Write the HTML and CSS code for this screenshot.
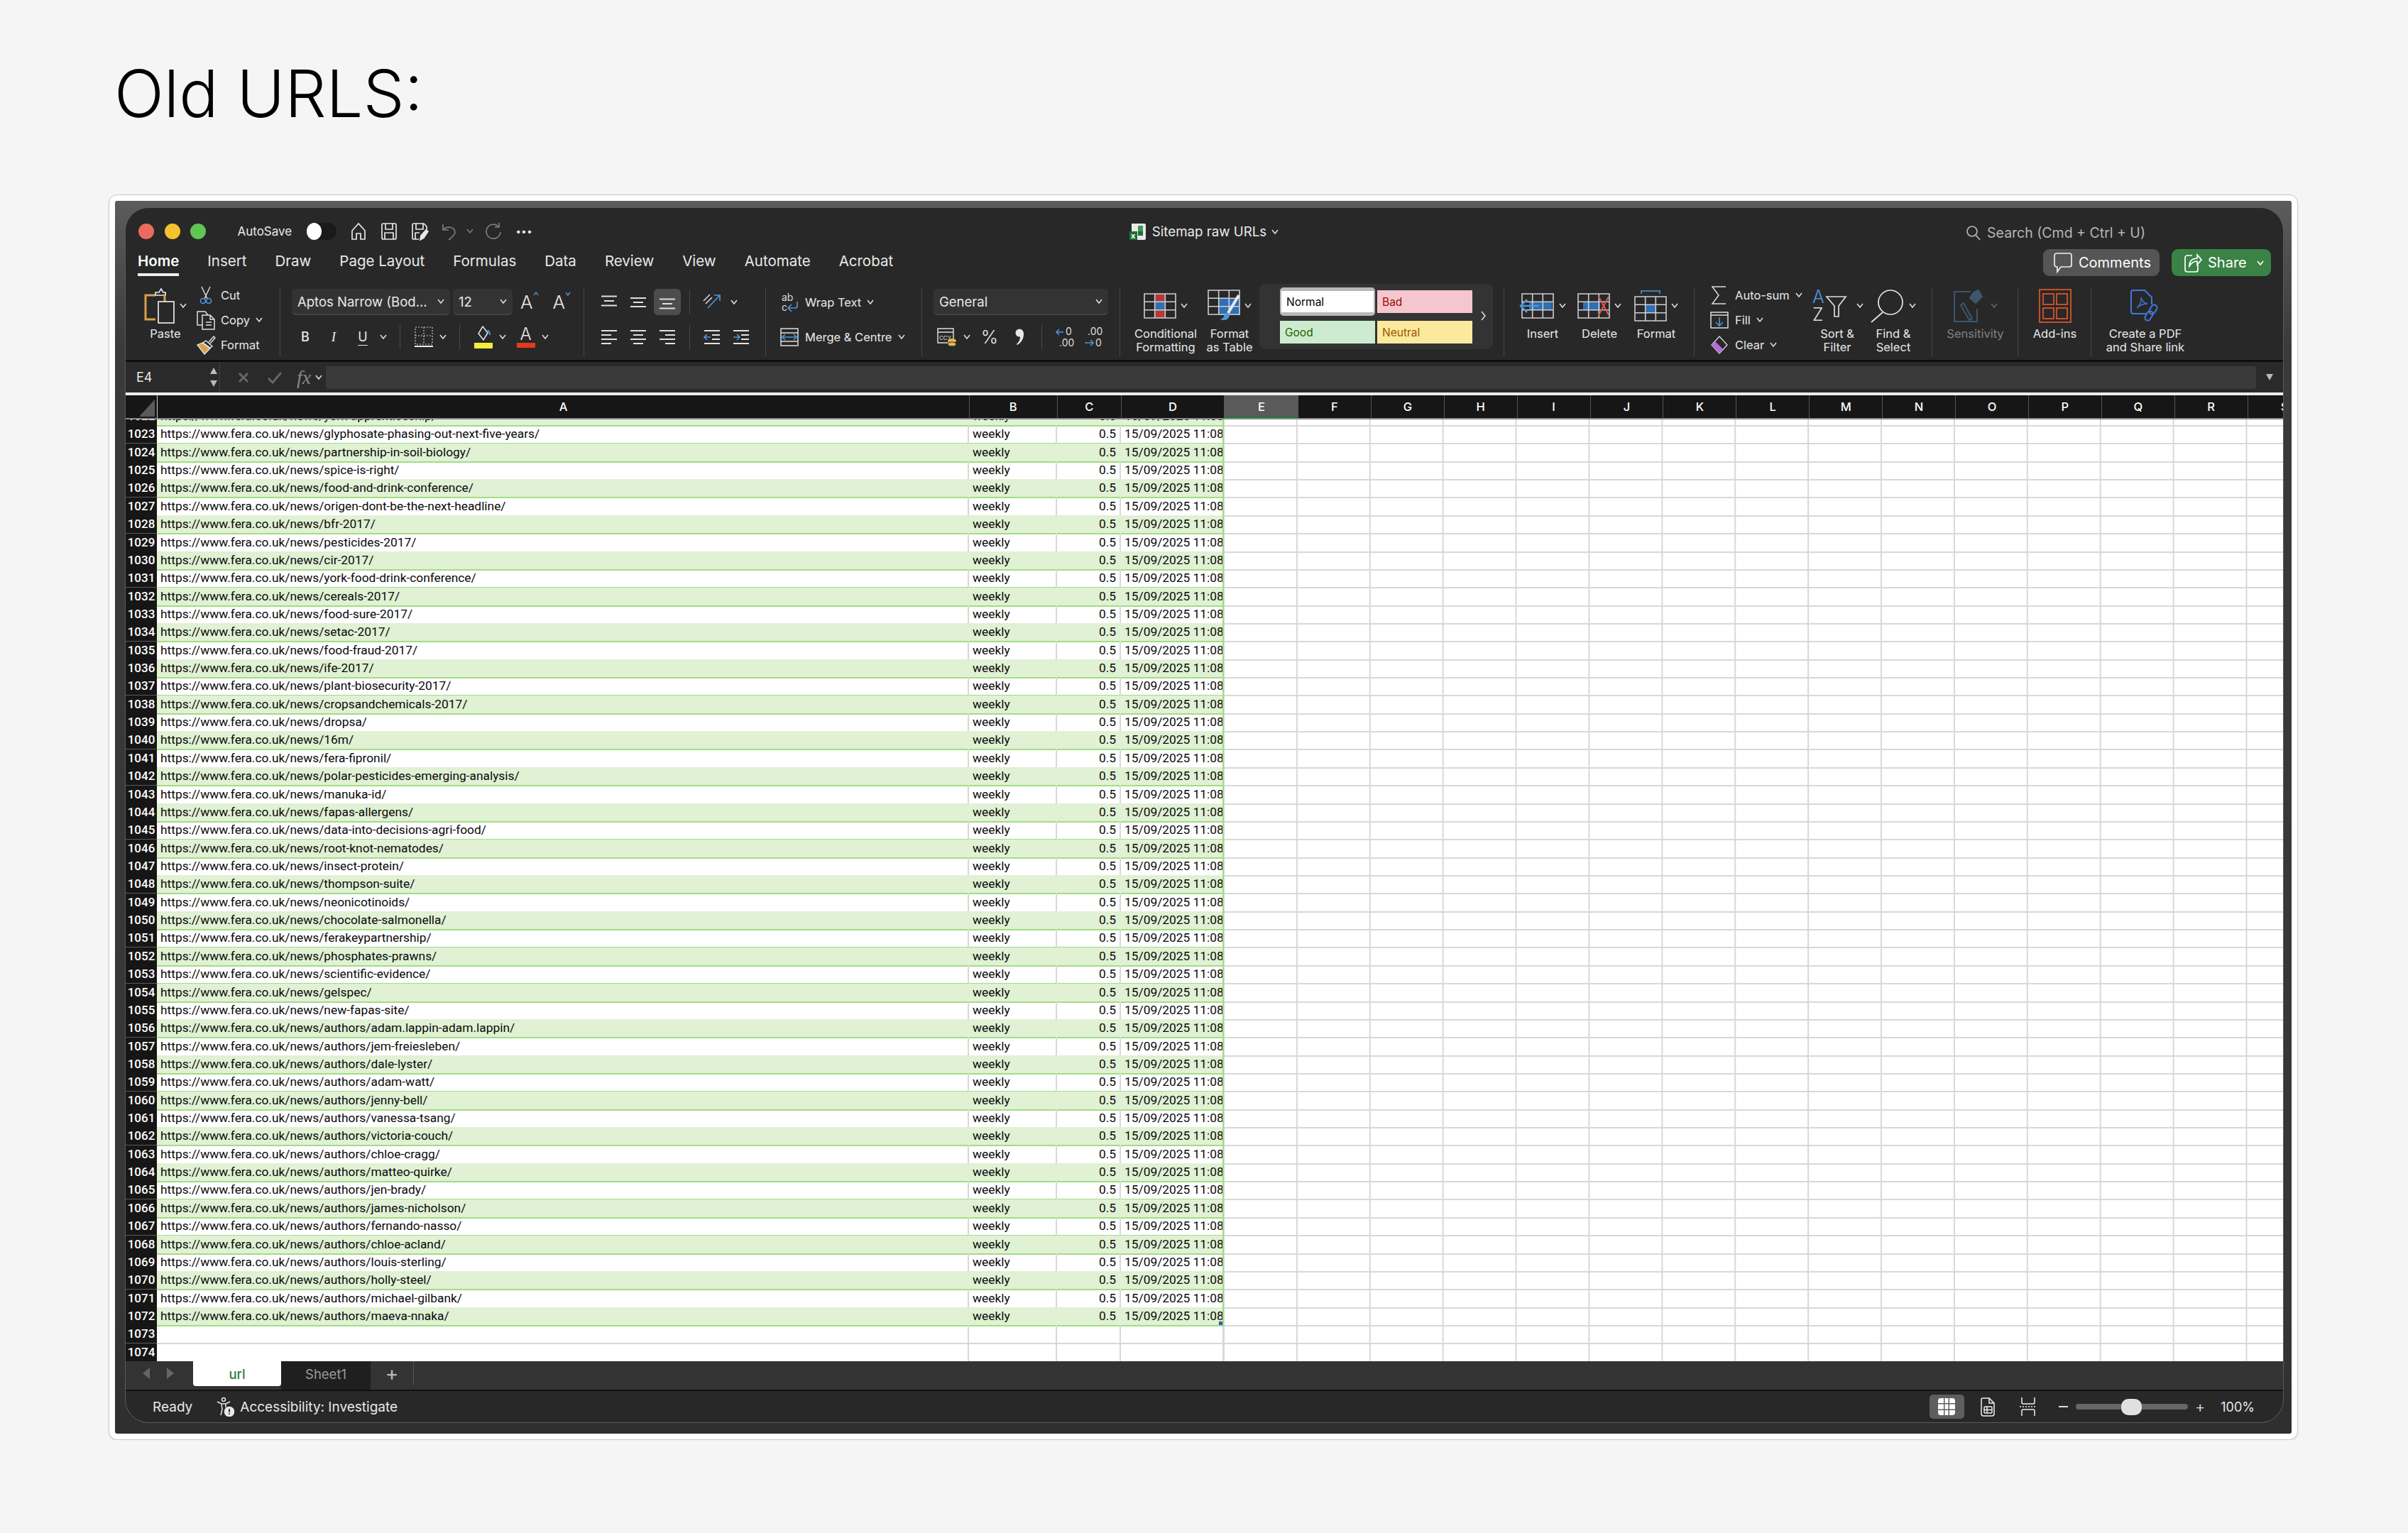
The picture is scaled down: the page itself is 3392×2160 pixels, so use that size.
FILE: index.html
```html
<!DOCTYPE html>
<html lang="en">
<head>
<meta charset="UTF-8">
<meta name="viewport" content="width=device-width, initial-scale=1.0">
<title>Old URLS</title>
<link rel="stylesheet" href="styles.css">
</head>
<body>

<svg class="defs" width="0" height="0">
  <symbol id="chev" viewBox="0 0 10 7"><path d="M1 1l4 5 4-5" fill="none" stroke="currentColor" stroke-width="1.6"/></symbol>
  <symbol id="grid" viewBox="0 0 46 36"><path d="M1 1h44v34H1zM1 12.300h44M1 23.700h44M15.700 1v34M30.300 1v34" fill="none" stroke="#cfcfcf" stroke-width="1.600"/></symbol>
</svg>

<h1 class="page-title">Old URLS:</h1>

<div class="card">
<div class="backdrop">
<div class="window">

  <div class="titlebar">
    <div class="titlebar-left">
      <span class="light red"></span><span class="light yellow"></span><span class="light green"></span>
      <span class="autosave">AutoSave</span>
      <span class="toggle"><span class="knob"></span></span>
      <svg class="qa" width="26" height="26" viewBox="0 0 26 26" fill="none" stroke="#e8e8e8" stroke-width="1.700"><path d="M4 24V12L13 2l9 10v12h-6v-8h-6v8z"/></svg>
      <svg class="qa" width="26" height="26" viewBox="0 0 26 26" fill="none" stroke="#e8e8e8" stroke-width="1.700"><path d="M3 4a2 2 0 0 1 2-2h16a2 2 0 0 1 2 2v18a2 2 0 0 1-2 2H5a2 2 0 0 1-2-2zM8 2v8h10V2M7 24v-9h12v9"/></svg>
      <svg class="qa" width="26" height="26" viewBox="0 0 26 26" fill="none" stroke="#e8e8e8" stroke-width="1.700"><path d="M12 24H5a2 2 0 0 1-2-2V4a2 2 0 0 1 2-2h14l4 4v5M8 2v8h10V2M7 24v-9h6"/><path d="M14 25l1-6 7-8 3 2-6 9z" fill="#e8e8e8"/></svg>
      <svg class="qa dim" width="26" height="26" viewBox="0 0 26 26" fill="none" stroke="#7c7c7c" stroke-width="1.700"><path d="M3 3v8h8M3 11c5-6 16-5 17 3 0 4-5 8-9 11"/></svg>
      <svg class="chev dim-chev"><use href="#chev"/></svg>
      <svg class="qa" width="26" height="26" viewBox="0 0 26 26" fill="none" stroke="#7c7c7c" stroke-width="1.700"><path d="M19 6a10 10 0 1 0 3 8M20 1v6h-6"/></svg>
      <span class="more">•••</span>
    </div>
    <div class="doc-title">
      <svg width="26" height="24" viewBox="0 0 26 24"><path d="M4 0h18a2 2 0 0 1 2 2v19a2 2 0 0 1-2 2H4z" fill="#e9e9e9"/><path d="M13 3h7v8h-7z" fill="#3d9a53"/><path d="M13 11h7v6h-7z" fill="#1f6e37"/><rect x="1" y="11" width="11" height="12" fill="#1f6e37"/><text x="3" y="21" class="svg-x">x</text></svg>
      <span>Sitemap raw URLs</span>
      <svg class="chev"><use href="#chev"/></svg>
    </div>
    <div class="search">
      <svg width="22" height="22" viewBox="0 0 22 22" fill="none" stroke="#b5b5b5" stroke-width="1.700"><circle cx="9" cy="9" r="7"/><path d="M14 14l6 7"/></svg>
      <span>Search (Cmd + Ctrl + U)</span>
    </div>
  </div>

  <div class="tabs">
    <span class="tab active">Home</span>
    <span class="tab">Insert</span>
    <span class="tab">Draw</span>
    <span class="tab">Page Layout</span>
    <span class="tab">Formulas</span>
    <span class="tab">Data</span>
    <span class="tab">Review</span>
    <span class="tab">View</span>
    <span class="tab">Automate</span>
    <span class="tab">Acrobat</span>
    <span class="btn-comments">
      <svg width="28" height="30" viewBox="0 0 28 30" fill="none" stroke="#eee" stroke-width="1.700"><path d="M5 2h18a3 3 0 0 1 3 3v13a3 3 0 0 1-3 3H11l-5 7v-7H5a3 3 0 0 1-3-3V5a3 3 0 0 1 3-3z"/></svg>
      Comments
    </span>
    <span class="btn-share">
      <svg width="26" height="30" viewBox="0 0 26 30" fill="none" stroke="#fff" stroke-width="1.700"><path d="M12 5H5a3 3 0 0 0-3 3v17a3 3 0 0 0 3 3h12a3 3 0 0 0 3-3v-7M8 20c0-8 5-11 11-11V4l6 7-6 7v-5c-5 0-8 2-11 7z"/></svg>
      Share
      <svg class="chev"><use href="#chev"/></svg>
    </span>
  </div>

  <div class="ribbon">

    <div class="group g-clip">
      <div class="big">
        <div class="big-icon">
          <svg width="44" height="50" viewBox="0 0 44 50" fill="none"><path d="M16 10H2v34h14" stroke="#d9a14a" stroke-width="3"/><path d="M30 10h-14V6h5l3-5 3 5h3z" stroke="#e8e8e8" stroke-width="1.700"/><path d="M29 10v9" stroke="#d9a14a" stroke-width="3"/><rect x="20" y="19" width="22" height="30" stroke="#e8e8e8" stroke-width="1.700"/></svg>
          <svg class="chev"><use href="#chev"/></svg>
        </div>
        <span class="label">Paste</span>
      </div>
      <div class="small-list">
        <div class="small-row"><span class="small-ic"><svg width="18" height="26" viewBox="0 0 18 26" fill="none"><path d="M3 1l8 17M15 1L7 18" stroke="#ddd" stroke-width="1.500"/><circle cx="5" cy="21" r="3.500" stroke="#4e95d9" stroke-width="1.700"/><circle cx="13" cy="21" r="3.500" stroke="#4e95d9" stroke-width="1.700"/></svg></span>Cut</div>
        <div class="small-row"><span class="small-ic"><svg width="28" height="28" viewBox="0 0 28 28" fill="none" stroke="#e0e0e0" stroke-width="1.500"><path d="M9 21H2V2h11l4 5"/><path d="M9 7h11l6 6v14H9zM20 7v6h6M14 17h8M14 21h8"/></svg></span>Copy<svg class="chev"><use href="#chev"/></svg></div>
        <div class="small-row"><span class="small-ic"><svg width="28" height="28" viewBox="0 0 28 28" fill="none"><path d="M18 10l7-8 2 2-7 8" stroke="#e0e0e0" stroke-width="1.500"/><path d="M14 8l9 8-3 2L10 11z" stroke="#e0e0e0" stroke-width="1.500"/><path d="M9 11l11 8-8 8-10-13z" fill="#d9a14a" stroke="#e8e8e8" stroke-width="1.300"/></svg></span>Format</div>
      </div>
    </div>

    <div class="group g-font">
      <div class="tool-row">
        <span class="select font-name">Aptos Narrow (Bod...<svg class="chev"><use href="#chev"/></svg></span>
        <span class="select font-size">12<svg class="chev"><use href="#chev"/></svg></span>
        <span class="grow-a">A<svg width="8" height="6" viewBox="0 0 8 6" fill="none" stroke="#4e95d9" stroke-width="1.400"><path d="M1 5l3-4 3 4"/></svg></span>
        <span class="shrink-a">A<svg width="8" height="6" viewBox="0 0 8 6" fill="none" stroke="#4e95d9" stroke-width="1.400"><path d="M1 1l3 4 3-4"/></svg></span>
      </div>
      <div class="tool-row">
        <span class="tb w38 fs-b">B</span>
        <span class="tb w42 fs-i">I</span>
        <span class="tb w40 fs-u">U</span>
        <span class="tb w18"><svg class="chev"><use href="#chev"/></svg></span>
        <span class="vsep"></span>
        <span class="tb w37"><svg width="26" height="30" viewBox="0 0 26 30" fill="none" stroke="#ccc" stroke-width="1.200" stroke-dasharray="2 2"><path d="M1 1h24v24H1zM13 1v24M1 13h24"/><path d="M0 28h26" stroke="#eee" stroke-width="2" stroke-dasharray="none"/></svg></span>
        <span class="tb w18"><svg class="chev"><use href="#chev"/></svg></span>
        <span class="vsep"></span>
        <span class="tb w37"><svg width="26" height="32" viewBox="0 0 26 32" fill="none"><path d="M12 1l7 9-6 10-7-9z" stroke="#e8e8e8" stroke-width="1.500"/><path d="M19 6c2 2 3 4 3 7" stroke="#4e95d9" stroke-width="2"/><rect x="0" y="24" width="26" height="8" fill="#f4ee3c"/></svg></span>
        <span class="tb w18"><svg class="chev"><use href="#chev"/></svg></span>
        <span class="tb w37 ml5 color-a"><span>A</span><span class="red-bar"></span></span>
        <span class="tb w18"><svg class="chev"><use href="#chev"/></svg></span>
      </div>
    </div>

    <div class="group g-align">
      <div class="tool-row gap3">
        <span class="tb w38"><svg class="lines" viewBox="0 0 24 20"><path d="M1 1.500h22M5 8h14M1 14.500h22"/></svg></span>
        <span class="tb w38"><svg class="lines" viewBox="0 0 24 20"><path d="M1 4h22M5 10h14M1 16h22"/></svg></span>
        <span class="tb w38 pressed"><svg class="lines" viewBox="0 0 24 20"><path d="M1 5.500h22M5 12h14M1 18.500h22"/></svg></span>
        <span class="vsep small"></span>
        <span class="tb w38"><svg width="28" height="28" viewBox="0 0 28 28" fill="none"><path d="M2 12l9-9M5 16l9-9" stroke="#ddd" stroke-width="1.500"/><path d="M8 22L24 5M17 4h8v8" stroke="#4e95d9" stroke-width="1.700"/></svg></span>
        <span class="tb w18"><svg class="chev"><use href="#chev"/></svg></span>
      </div>
      <div class="tool-row gap3">
        <span class="tb w38"><svg class="lines" viewBox="0 0 24 22"><path d="M1 2h22M1 8h14M1 14h22M1 20h14"/></svg></span>
        <span class="tb w38"><svg class="lines" viewBox="0 0 24 22"><path d="M1 2h22M5 8h14M1 14h22M5 20h14"/></svg></span>
        <span class="tb w38"><svg class="lines" viewBox="0 0 24 22"><path d="M1 2h22M9 8h14M1 14h22M9 20h14"/></svg></span>
        <span class="vsep small"></span>
        <span class="tb w38"><svg class="lines" viewBox="0 0 24 22"><path d="M1 2h22M12 8h11M12 14h11M1 20h22"/><path class="blue" d="M10 11H2M5 7l-4 4 4 4"/></svg></span>
        <span class="tb w38"><svg class="lines" viewBox="0 0 24 22"><path d="M1 2h22M12 8h11M12 14h11M1 20h22"/><path class="blue" d="M1 11h8M6 7l4 4-4 4"/></svg></span>
      </div>
    </div>

    <div class="group g-wrap">
      <div class="tool-row">
        <span class="tb w30"><svg width="26" height="30" viewBox="0 0 26 30" fill="none"><text x="2" y="13" class="svg-small">ab</text><text x="2" y="27" class="svg-small">c</text><path d="M24 14v6a3 3 0 0 1-3 3H12M16 18l-5 5 5 5" stroke="#4e95d9" stroke-width="1.700"/></svg></span>
        <span class="tb-text">Wrap Text</span><svg class="chev"><use href="#chev"/></svg>
      </div>
      <div class="tool-row">
        <span class="tb w30"><svg width="26" height="26" viewBox="0 0 26 26" fill="none"><path d="M1 1h24v24H1zM1 7h24M1 19h24" stroke="#ddd" stroke-width="1.500"/><path d="M3 13h20M7 9l-4 4 4 4M19 9l4 4-4 4" stroke="#4e95d9" stroke-width="1.700"/></svg></span>
        <span class="tb-text">Merge &amp; Centre</span><svg class="chev"><use href="#chev"/></svg>
      </div>
    </div>

    <div class="group g-number">
      <div class="tool-row">
        <span class="select number-format">General<svg class="chev"><use href="#chev"/></svg></span>
      </div>
      <div class="tool-row">
        <span class="tb w38"><svg width="28" height="28" viewBox="0 0 28 28" fill="none"><path d="M1 2h22v20H1zM1 7h22" stroke="#ddd" stroke-width="1.500"/><text x="3" y="18" class="svg-tiny">CCY</text><ellipse cx="21" cy="19" rx="6" ry="3" fill="#e5b84b"/><ellipse cx="21" cy="24" rx="6" ry="3" fill="#e5b84b" stroke="#282828"/></svg></span>
        <span class="tb w18"><svg class="chev"><use href="#chev"/></svg></span>
        <span class="tb w38 ml4 fs-pct">%</span>
        <span class="tb w38 ml4"><svg width="12" height="24" viewBox="0 0 12 24" fill="#e8e8e8"><circle cx="6" cy="6" r="5.500"/><path d="M6 1c5 0 6 4 6 7 0 7-4 12-9 15l-1-1c3-3 5-6 5-10z"/></svg></span>
        <span class="vsep slim"></span>
        <span class="tb w40"><svg width="26" height="32" viewBox="0 0 26 32" fill="none"><text x="14" y="13" class="svg-small">0</text><text x="5" y="29" class="svg-small">.00</text><path d="M11 9H2M5 5L1 9l4 4" stroke="#4e95d9" stroke-width="1.600"/></svg></span>
        <span class="tb w40"><svg width="26" height="32" viewBox="0 0 26 32" fill="none"><text x="5" y="13" class="svg-small">.00</text><text x="16" y="29" class="svg-small">0</text><path d="M1 24h11M9 20l4 4-4 4" stroke="#4e95d9" stroke-width="1.600"/></svg></span>
      </div>
    </div>

    <div class="group g-format">
      <div class="big cond">
        <div class="big-icon">
          <svg width="46" height="36" viewBox="0 0 46 36"><rect x="16" y="1" width="15" height="11" fill="#b23a3a"/><rect x="16" y="12" width="15" height="12" fill="#2f6fb5"/><rect x="16" y="24" width="15" height="11" fill="#b23a3a"/><use href="#grid" width="46" height="36"/></svg>
          <svg class="chev"><use href="#chev"/></svg>
        </div>
        <span class="label">Conditional<br>Formatting</span>
      </div>
      <div class="big table-fmt">
        <div class="big-icon">
          <svg width="46" height="46" viewBox="0 0 46 46" fill="none"><rect x="16" y="13" width="30" height="23" fill="#2f6fb5"/><use href="#grid" width="46" height="36"/><path d="M44 8L29 33" stroke="#e8e8e8" stroke-width="4"/><path d="M27 32c-3 2-3 8-9 10 6 3 13 0 13-7z" fill="#4e95d9"/></svg>
          <svg class="chev"><use href="#chev"/></svg>
        </div>
        <span class="label">Format<br>as Table</span>
      </div>
    </div>

    <div class="group g-styles">
      <div class="styles-panel">
        <div class="style-grid">
          <span class="style s-normal">Normal</span>
          <span class="style s-bad">Bad</span>
          <span class="style s-good">Good</span>
          <span class="style s-neutral">Neutral</span>
        </div>
        <svg class="styles-more" width="8" height="14" viewBox="0 0 8 14" fill="none" stroke="#ddd" stroke-width="1.600"><path d="M1 1l5 6-5 6"/></svg>
      </div>
    </div>

    <div class="group g-cells">
      <div class="big cell-btn">
        <div class="big-icon">
          <svg width="50" height="36" viewBox="0 0 50 36" fill="none"><rect x="14" y="12" width="32" height="12" fill="#2f6fb5"/><use href="#grid" x="3" width="46" height="36"/><path d="M28 18H3M11 9l-9 9 9 9" stroke="#4e95d9" stroke-width="2.500"/></svg>
          <svg class="chev"><use href="#chev"/></svg>
        </div>
        <span class="label">Insert</span>
      </div>
      <div class="big cell-btn">
        <div class="big-icon">
          <svg width="46" height="36" viewBox="0 0 46 36" fill="none"><rect x="8" y="12" width="24" height="12" fill="#2f6fb5"/><use href="#grid" width="46" height="36"/><path d="M30 5l14 26M44 5L30 31" stroke="#e0584c" stroke-width="2"/></svg>
          <svg class="chev"><use href="#chev"/></svg>
        </div>
        <span class="label">Delete</span>
      </div>
      <div class="big cell-btn">
        <div class="big-icon">
          <svg width="46" height="44" viewBox="0 0 46 44" fill="none"><path d="M10 1h26M10 0v5M36 0v5" stroke="#4e95d9" stroke-width="1.600"/><g transform="translate(0 8)"><rect x="16" y="12" width="15" height="12" fill="#2f6fb5"/><use href="#grid" width="46" height="36"/></g></svg>
          <svg class="chev"><use href="#chev"/></svg>
        </div>
        <span class="label">Format</span>
      </div>
    </div>

    <div class="group g-edit">
      <div class="small-list edit-list">
        <div class="small-row"><span class="small-ic"><svg width="24" height="26" viewBox="0 0 24 26" fill="none" stroke="#ddd" stroke-width="1.500"><path d="M21 1H2l9 12L2 25h19"/></svg></span>Auto-sum<svg class="chev"><use href="#chev"/></svg></div>
        <div class="small-row"><span class="small-ic"><svg width="26" height="24" viewBox="0 0 26 24" fill="none"><path d="M1 1h24v22H1zM1 5h24" stroke="#ddd" stroke-width="1.500"/><path d="M13 8v12M8 15l5 5 5-5" stroke="#4e95d9" stroke-width="1.600"/></svg></span>Fill<svg class="chev"><use href="#chev"/></svg></div>
        <div class="small-row"><span class="small-ic"><svg width="26" height="26" viewBox="0 0 26 26"><path d="M13 1l11 12-11 12L2 13z" fill="none" stroke="#ddd" stroke-width="1.300"/><path d="M7 8l11 11-5 6L2 13z" fill="#b66bd6"/></svg></span>Clear<svg class="chev"><use href="#chev"/></svg></div>
      </div>
      <div class="big sort-btn">
        <div class="big-icon">
          <svg width="58" height="48" viewBox="0 0 58 48" fill="none"><text x="2" y="20" class="svg-sort blue-text">A</text><text x="2" y="45" class="svg-sort">Z</text><path d="M22 11h27L39 24v15h-6V24z" stroke="#ddd" stroke-width="1.700"/></svg>
          <svg class="chev"><use href="#chev"/></svg>
        </div>
        <span class="label">Sort &amp;<br>Filter</span>
      </div>
      <div class="big find-btn">
        <div class="big-icon">
          <svg width="48" height="48" viewBox="0 0 48 48" fill="none" stroke="#e8e8e8" stroke-width="1.700"><ellipse cx="28" cy="19" rx="17" ry="17"/><path d="M17 33L1 47"/></svg>
          <svg class="chev"><use href="#chev"/></svg>
        </div>
        <span class="label">Find &amp;<br>Select</span>
      </div>
    </div>

    <div class="group g-sens">
      <div class="big">
        <div class="big-icon dimmed">
          <svg width="46" height="46" viewBox="0 0 46 46" fill="none" stroke="#3d566e" stroke-width="2"><path d="M24 3H1v42h32V27"/><path d="M10 22l12 21 4-2-12-22z"/><path d="M28 4l-5 8 8 7 9-9-5-9z" fill="#3d566e"/></svg>
          <svg class="chev"><use href="#chev"/></svg>
        </div>
        <span class="label dim-label">Sensitivity</span>
      </div>
    </div>

    <div class="group g-addins">
      <div class="big">
        <div class="big-icon">
          <svg width="46" height="48" viewBox="0 0 46 48" fill="none" stroke="#c4502a" stroke-width="2"><path d="M1 1h44v46H1z"/><path d="M6 7h15v15H6zM25 7h15v15H25zM6 27h15v15H6zM25 27h15v15H25z"/></svg>
        </div>
        <span class="label">Add-ins</span>
      </div>
    </div>

    <div class="group g-pdf">
      <div class="big">
        <div class="big-icon">
          <svg width="42" height="46" viewBox="0 0 42 46" fill="none" stroke="#3f78e0" stroke-width="2"><path d="M22 34H4a3 3 0 0 1-3-3V4a3 3 0 0 1 3-3h16l10 10v10"/><path d="M9 26c4-3 7-10 6-15 1 5 4 8 9 9-6 0-11 2-15 6z" stroke-width="1.300"/><rect x="28" y="21" width="8" height="14" rx="4" transform="rotate(30 32 28)"/><rect x="22" y="30" width="8" height="14" rx="4" transform="rotate(30 26 37)"/></svg>
        </div>
        <span class="label">Create a PDF<br>and Share link</span>
      </div>
    </div>
  </div>

  <div class="formula-bar">
    <div class="name-box">
      <span>E4</span>
      <span class="stepper"><i class="tri-up"></i><i class="tri-down"></i></span>
    </div>
    <svg class="fb-ic" width="16" height="16" viewBox="0 0 16 16" stroke="#666" stroke-width="3"><path d="M2 2l12 12M14 2L2 14"/></svg>
    <svg class="fb-ic" width="22" height="18" viewBox="0 0 22 18" fill="none" stroke="#666" stroke-width="3"><path d="M2 10l6 6L20 2"/></svg>
    <span class="fx">fx</span>
    <svg class="chev"><use href="#chev"/></svg>
    <div class="formula-input"></div>
    <div class="formula-drop"><i class="tri-down"></i></div>
  </div>

  <div class="sheet">
    <div class="col-head">
      <span class="corner"></span>
      <span class="col col-a">A</span>
      <span class="col col-b">B</span>
      <span class="col col-c">C</span>
      <span class="col col-d">D</span>
      <span class="col col-e current">E</span>
      <span class="col col-n">F</span>
      <span class="col col-n">G</span>
      <span class="col col-n">H</span>
      <span class="col col-n">I</span>
      <span class="col col-n">J</span>
      <span class="col col-n">K</span>
      <span class="col col-n">L</span>
      <span class="col col-n">M</span>
      <span class="col col-n">N</span>
      <span class="col col-n">O</span>
      <span class="col col-n">P</span>
      <span class="col col-n">Q</span>
      <span class="col col-n">R</span>
      <span class="col col-n last">S</span>
    </div>
    <div class="rows">
      <div class="row t first"><b>1022</b><span>https://www.fera.co.uk/news/york-apprenticeship/</span><span>weekly</span><span>0.5</span><span>15/09/2025 11:08</span><i></i></div>
      <div class="row t"><b>1023</b><span>https://www.fera.co.uk/news/glyphosate-phasing-out-next-five-years/</span><span>weekly</span><span>0.5</span><span>15/09/2025 11:08</span><i></i></div>
      <div class="row t"><b>1024</b><span>https://www.fera.co.uk/news/partnership-in-soil-biology/</span><span>weekly</span><span>0.5</span><span>15/09/2025 11:08</span><i></i></div>
      <div class="row t"><b>1025</b><span>https://www.fera.co.uk/news/spice-is-right/</span><span>weekly</span><span>0.5</span><span>15/09/2025 11:08</span><i></i></div>
      <div class="row t"><b>1026</b><span>https://www.fera.co.uk/news/food-and-drink-conference/</span><span>weekly</span><span>0.5</span><span>15/09/2025 11:08</span><i></i></div>
      <div class="row t"><b>1027</b><span>https://www.fera.co.uk/news/origen-dont-be-the-next-headline/</span><span>weekly</span><span>0.5</span><span>15/09/2025 11:08</span><i></i></div>
      <div class="row t"><b>1028</b><span>https://www.fera.co.uk/news/bfr-2017/</span><span>weekly</span><span>0.5</span><span>15/09/2025 11:08</span><i></i></div>
      <div class="row t"><b>1029</b><span>https://www.fera.co.uk/news/pesticides-2017/</span><span>weekly</span><span>0.5</span><span>15/09/2025 11:08</span><i></i></div>
      <div class="row t"><b>1030</b><span>https://www.fera.co.uk/news/cir-2017/</span><span>weekly</span><span>0.5</span><span>15/09/2025 11:08</span><i></i></div>
      <div class="row t"><b>1031</b><span>https://www.fera.co.uk/news/york-food-drink-conference/</span><span>weekly</span><span>0.5</span><span>15/09/2025 11:08</span><i></i></div>
      <div class="row t"><b>1032</b><span>https://www.fera.co.uk/news/cereals-2017/</span><span>weekly</span><span>0.5</span><span>15/09/2025 11:08</span><i></i></div>
      <div class="row t"><b>1033</b><span>https://www.fera.co.uk/news/food-sure-2017/</span><span>weekly</span><span>0.5</span><span>15/09/2025 11:08</span><i></i></div>
      <div class="row t"><b>1034</b><span>https://www.fera.co.uk/news/setac-2017/</span><span>weekly</span><span>0.5</span><span>15/09/2025 11:08</span><i></i></div>
      <div class="row t"><b>1035</b><span>https://www.fera.co.uk/news/food-fraud-2017/</span><span>weekly</span><span>0.5</span><span>15/09/2025 11:08</span><i></i></div>
      <div class="row t"><b>1036</b><span>https://www.fera.co.uk/news/ife-2017/</span><span>weekly</span><span>0.5</span><span>15/09/2025 11:08</span><i></i></div>
      <div class="row t"><b>1037</b><span>https://www.fera.co.uk/news/plant-biosecurity-2017/</span><span>weekly</span><span>0.5</span><span>15/09/2025 11:08</span><i></i></div>
      <div class="row t"><b>1038</b><span>https://www.fera.co.uk/news/cropsandchemicals-2017/</span><span>weekly</span><span>0.5</span><span>15/09/2025 11:08</span><i></i></div>
      <div class="row t"><b>1039</b><span>https://www.fera.co.uk/news/dropsa/</span><span>weekly</span><span>0.5</span><span>15/09/2025 11:08</span><i></i></div>
      <div class="row t"><b>1040</b><span>https://www.fera.co.uk/news/16m/</span><span>weekly</span><span>0.5</span><span>15/09/2025 11:08</span><i></i></div>
      <div class="row t"><b>1041</b><span>https://www.fera.co.uk/news/fera-fipronil/</span><span>weekly</span><span>0.5</span><span>15/09/2025 11:08</span><i></i></div>
      <div class="row t"><b>1042</b><span>https://www.fera.co.uk/news/polar-pesticides-emerging-analysis/</span><span>weekly</span><span>0.5</span><span>15/09/2025 11:08</span><i></i></div>
      <div class="row t"><b>1043</b><span>https://www.fera.co.uk/news/manuka-id/</span><span>weekly</span><span>0.5</span><span>15/09/2025 11:08</span><i></i></div>
      <div class="row t"><b>1044</b><span>https://www.fera.co.uk/news/fapas-allergens/</span><span>weekly</span><span>0.5</span><span>15/09/2025 11:08</span><i></i></div>
      <div class="row t"><b>1045</b><span>https://www.fera.co.uk/news/data-into-decisions-agri-food/</span><span>weekly</span><span>0.5</span><span>15/09/2025 11:08</span><i></i></div>
      <div class="row t"><b>1046</b><span>https://www.fera.co.uk/news/root-knot-nematodes/</span><span>weekly</span><span>0.5</span><span>15/09/2025 11:08</span><i></i></div>
      <div class="row t"><b>1047</b><span>https://www.fera.co.uk/news/insect-protein/</span><span>weekly</span><span>0.5</span><span>15/09/2025 11:08</span><i></i></div>
      <div class="row t"><b>1048</b><span>https://www.fera.co.uk/news/thompson-suite/</span><span>weekly</span><span>0.5</span><span>15/09/2025 11:08</span><i></i></div>
      <div class="row t"><b>1049</b><span>https://www.fera.co.uk/news/neonicotinoids/</span><span>weekly</span><span>0.5</span><span>15/09/2025 11:08</span><i></i></div>
      <div class="row t"><b>1050</b><span>https://www.fera.co.uk/news/chocolate-salmonella/</span><span>weekly</span><span>0.5</span><span>15/09/2025 11:08</span><i></i></div>
      <div class="row t"><b>1051</b><span>https://www.fera.co.uk/news/ferakeypartnership/</span><span>weekly</span><span>0.5</span><span>15/09/2025 11:08</span><i></i></div>
      <div class="row t"><b>1052</b><span>https://www.fera.co.uk/news/phosphates-prawns/</span><span>weekly</span><span>0.5</span><span>15/09/2025 11:08</span><i></i></div>
      <div class="row t"><b>1053</b><span>https://www.fera.co.uk/news/scientific-evidence/</span><span>weekly</span><span>0.5</span><span>15/09/2025 11:08</span><i></i></div>
      <div class="row t"><b>1054</b><span>https://www.fera.co.uk/news/gelspec/</span><span>weekly</span><span>0.5</span><span>15/09/2025 11:08</span><i></i></div>
      <div class="row t"><b>1055</b><span>https://www.fera.co.uk/news/new-fapas-site/</span><span>weekly</span><span>0.5</span><span>15/09/2025 11:08</span><i></i></div>
      <div class="row t"><b>1056</b><span>https://www.fera.co.uk/news/authors/adam.lappin-adam.lappin/</span><span>weekly</span><span>0.5</span><span>15/09/2025 11:08</span><i></i></div>
      <div class="row t"><b>1057</b><span>https://www.fera.co.uk/news/authors/jem-freiesleben/</span><span>weekly</span><span>0.5</span><span>15/09/2025 11:08</span><i></i></div>
      <div class="row t"><b>1058</b><span>https://www.fera.co.uk/news/authors/dale-lyster/</span><span>weekly</span><span>0.5</span><span>15/09/2025 11:08</span><i></i></div>
      <div class="row t"><b>1059</b><span>https://www.fera.co.uk/news/authors/adam-watt/</span><span>weekly</span><span>0.5</span><span>15/09/2025 11:08</span><i></i></div>
      <div class="row t"><b>1060</b><span>https://www.fera.co.uk/news/authors/jenny-bell/</span><span>weekly</span><span>0.5</span><span>15/09/2025 11:08</span><i></i></div>
      <div class="row t"><b>1061</b><span>https://www.fera.co.uk/news/authors/vanessa-tsang/</span><span>weekly</span><span>0.5</span><span>15/09/2025 11:08</span><i></i></div>
      <div class="row t"><b>1062</b><span>https://www.fera.co.uk/news/authors/victoria-couch/</span><span>weekly</span><span>0.5</span><span>15/09/2025 11:08</span><i></i></div>
      <div class="row t"><b>1063</b><span>https://www.fera.co.uk/news/authors/chloe-cragg/</span><span>weekly</span><span>0.5</span><span>15/09/2025 11:08</span><i></i></div>
      <div class="row t"><b>1064</b><span>https://www.fera.co.uk/news/authors/matteo-quirke/</span><span>weekly</span><span>0.5</span><span>15/09/2025 11:08</span><i></i></div>
      <div class="row t"><b>1065</b><span>https://www.fera.co.uk/news/authors/jen-brady/</span><span>weekly</span><span>0.5</span><span>15/09/2025 11:08</span><i></i></div>
      <div class="row t"><b>1066</b><span>https://www.fera.co.uk/news/authors/james-nicholson/</span><span>weekly</span><span>0.5</span><span>15/09/2025 11:08</span><i></i></div>
      <div class="row t"><b>1067</b><span>https://www.fera.co.uk/news/authors/fernando-nasso/</span><span>weekly</span><span>0.5</span><span>15/09/2025 11:08</span><i></i></div>
      <div class="row t"><b>1068</b><span>https://www.fera.co.uk/news/authors/chloe-acland/</span><span>weekly</span><span>0.5</span><span>15/09/2025 11:08</span><i></i></div>
      <div class="row t"><b>1069</b><span>https://www.fera.co.uk/news/authors/louis-sterling/</span><span>weekly</span><span>0.5</span><span>15/09/2025 11:08</span><i></i></div>
      <div class="row t"><b>1070</b><span>https://www.fera.co.uk/news/authors/holly-steel/</span><span>weekly</span><span>0.5</span><span>15/09/2025 11:08</span><i></i></div>
      <div class="row t"><b>1071</b><span>https://www.fera.co.uk/news/authors/michael-gilbank/</span><span>weekly</span><span>0.5</span><span>15/09/2025 11:08</span><i></i></div>
      <div class="row t end"><b>1072</b><span>https://www.fera.co.uk/news/authors/maeva-nnaka/</span><span>weekly</span><span>0.5</span><span>15/09/2025 11:08</span><i></i></div>
      <div class="row"><b>1073</b><span></span><span></span><span></span><span></span><i></i></div>
      <div class="row"><b>1074</b><span></span><span></span><span></span><span></span><i></i></div>
    </div>
  </div>

  <div class="sheet-tabs">
    <span class="nav-arrows"><i class="tri-left"></i><i class="tri-right"></i></span>
    <span class="sheet-tab on">url</span>
    <span class="sheet-tab">Sheet1</span>
    <span class="sheet-add">+</span>
  </div>

  <div class="status">
    <span class="ready">Ready</span>
    <svg width="26" height="28" viewBox="0 0 26 28" fill="none" stroke="#e8e8e8" stroke-width="1.500"><circle cx="11" cy="4" r="2.500"/><path d="M2 7l6 3h6l6-3M8 10l1 8-2 8M14 10v5"/><circle cx="19" cy="21" r="6.500" fill="#e8e8e8"/><path d="M19 17v5M19 23.500v1.500" stroke="#282828" stroke-width="1.800"/></svg>
    <span class="a11y">Accessibility: Investigate</span>
    <span class="view-btn on"><svg width="24" height="24" viewBox="0 0 24 24"><path d="M4 0h4v7H0V4a4 4 0 0 1 4-4zM9.500 0h5v7h-5zM16 0h4a4 4 0 0 1 4 4v3h-8zM0 8.500h8v7H0zM9.500 8.500h5v7h-5zM16 8.500h8v7h-8zM0 17h8v7H4a4 4 0 0 1-4-4zM9.500 17h5v7h-5zM16 17h8v3a4 4 0 0 1-4 4h-4z" fill="#fff"/></svg></span>
    <span class="view-btn"><svg width="20" height="27" viewBox="0 0 20 27" fill="none" stroke="#eee" stroke-width="1.500"><path d="M3 1h9l7 7v15a3 3 0 0 1-3 3H4a3 3 0 0 1-3-3V3a2 2 0 0 1 2-2zM12 1v7h7"/><rect x="5" y="13" width="11" height="9" rx="1.500"/><path d="M5 17.500h11M9 13v9"/></svg></span>
    <span class="view-btn"><svg width="24" height="26" viewBox="0 0 24 26" fill="none" stroke="#eee" stroke-width="1.500"><path d="M3 0v7a2 2 0 0 0 2 2h14a2 2 0 0 0 2-2V0M3 26v-7a2 2 0 0 1 2-2h14a2 2 0 0 1 2 2v7"/><path d="M0 13h24" stroke-dasharray="2 2"/></svg></span>
    <span class="zoom-minus"></span>
    <span class="slider"><span class="slider-knob"></span></span>
    <span class="zoom-plus">+</span>
    <span class="zoom-val">100%</span>
  </div>

</div>
</div>
</div>

</body>
</html>
```

FILE: styles.css
```css
* {
  box-sizing: border-box;
}

body {
  margin: 0;
  background: #f5f5f5;
  font-family: Inter, "Liberation Sans", sans-serif;
  color: #e8e8e8;
}

svg {
  flex: none;
}

.defs {
  display: block;
  height: 0;
}

.chev {
  width: 10px;
  height: 7px;
  color: #dcdcdc;
}

.page-title {
  height: 274px;
  margin: 0;
  padding: 76px 0 0 161px;
  font-size: 92px;
  font-weight: 300;
  line-height: 112px;
  color: #000;
}

.card {
  width: 3084px;
  height: 1755px;
  margin-left: 153px;
  padding: 8px;
  background: #fff;
  border: 1px solid #c8c8c8;
  border-radius: 12px;
  box-shadow: 0 1px 2px rgba(0, 0, 0, 0.12);
}

.backdrop {
  height: 100%;
  padding: 10px 12px 16px 15px;
  background: linear-gradient(#5c5c5c, #3a3a3a 12%, #363636 90%, #2e2e2e);
  border-radius: 3px;
}

.window {
  display: flex;
  flex-direction: column;
  height: 100%;
  background: #282828;
  border-radius: 32px;
  overflow: hidden;
  box-shadow: 0 0 0 1px #5a5a5a;
}

/* title bar */
.titlebar {
  display: grid;
  grid-template-columns: 1fr auto 1fr;
  align-items: center;
  height: 55px;
  padding: 10px 0 0 18px;
  flex: none;
}

.titlebar-left {
  display: flex;
  align-items: center;
}

.light {
  width: 22px;
  height: 22px;
  margin-right: 14.500px;
  border-radius: 50%;
}

.red { background: #ec6a5e; }
.yellow { background: #f4c22f; }
.green { background: #61c554; }

.autosave {
  margin-left: 30px;
  font-size: 17px;
}

.toggle {
  width: 42px;
  height: 24px;
  margin: 0 18px 0 21px;
  background: #1a1a1a;
  border-radius: 12px;
}

.knob {
  display: block;
  width: 21px;
  height: 24px;
  background: #fff;
  border-radius: 50%;
}

.qa {
  margin-right: 17px;
}

.dim {
  margin-right: 10px;
}

.dim-chev {
  margin-right: 16px;
  color: #777;
}

.more {
  font-size: 14px;
}

.doc-title {
  display: flex;
  align-items: center;
  gap: 7px;
  padding: 2px 20px 0 0;
  font-size: 18.700px;
}

.svg-x {
  font: 700 11px Inter, sans-serif;
  fill: #fff;
}

.search {
  display: flex;
  align-items: center;
  gap: 8px;
  justify-self: end;
  margin-right: 194px;
  padding-top: 4px;
  font-size: 19.500px;
  color: #b5b5b5;
}

/* tabs */
.tabs {
  display: flex;
  align-items: flex-start;
  gap: 40px;
  height: 52px;
  padding: 8px 17px 0;
  flex: none;
}

.tab {
  padding-bottom: 5px;
  font-size: 20.500px;
  line-height: 24px;
  border-bottom: 4px solid transparent;
}

.tab.active {
  font-weight: 600;
  color: #fff;
  border-bottom-color: #eee;
}

.btn-comments, .btn-share {
  display: flex;
  align-items: center;
  height: 38px;
  margin-top: -5px;
  font-size: 20px;
  color: #fff;
  border-radius: 9px;
}

.btn-comments {
  gap: 8px;
  width: 164px;
  margin-left: auto;
  margin-right: -23px;
  padding-left: 14px;
  background: #555;
}

.btn-share {
  gap: 8px;
  width: 140px;
  padding-left: 17px;
  background: #3a8245;
}

.btn-share .chev {
  margin-left: 6px;
  color: #fff;
}

/* ribbon */
.ribbon {
  display: flex;
  height: 110px;
  flex: none;
  border-bottom: 3px solid #0e0e0e;
}

.group {
  flex: none;
  height: 107px;
  background: linear-gradient(#474747, #474747) right 6px / 1px 96px no-repeat;
}

.g-clip { display: flex; width: 218px; padding-left: 26px; gap: 13px; }
.g-font { width: 428px; padding: 7px 0 0 16px; }
.g-align { width: 256px; padding: 7px 0 0 16px; }
.g-wrap { width: 220px; padding: 7px 0 0 18px; }
.g-number { width: 279px; padding: 7px 0 0 16px; }
.g-format { display: flex; width: 196px; padding-left: 15px; gap: 8px; background: none; }
.g-styles { width: 345px; }
.g-cells { display: flex; width: 268px; padding-left: 19px; gap: 10px; }
.g-edit { display: flex; width: 335px; padding-left: 20px; }
.g-sens { width: 121px; }
.g-addins { width: 103px; }
.g-pdf { width: 152px; background: none; }

.big {
  display: flex;
  flex-direction: column;
  align-items: center;
}

.big-icon {
  display: flex;
  align-items: center;
  justify-content: center;
  gap: 6px;
  height: 61px;
}

.label {
  font-size: 16.500px;
  line-height: 19px;
  text-align: center;
  white-space: nowrap;
}

.dim-label {
  color: #808080;
}

.dimmed .chev {
  color: #666;
}

.cond { width: 98px; }
.table-fmt { width: 66px; }
.cell-btn { width: 70px; }
.sort-btn { width: 78px; }
.find-btn { width: 80px; }
.g-sens .big, .g-addins .big, .g-pdf .big { width: 100%; }

.small-list {
  display: flex;
  flex-direction: column;
  margin-top: -2px;
}

.edit-list {
  width: 142px;
}

.small-row {
  display: flex;
  align-items: center;
  gap: 8px;
  height: 35px;
  font-size: 16.500px;
}

.small-ic {
  display: flex;
  justify-content: center;
  width: 28px;
  margin-right: -1px;
}

.edit-list .small-ic {
  width: 29px;
  margin-right: 0;
}

.tool-row {
  display: flex;
  align-items: center;
  height: 37px;
  margin-bottom: 12px;
}

.gap3 { gap: 3px; }

.tb {
  display: flex;
  align-items: center;
  justify-content: center;
  height: 37px;
  flex: none;
}

.w18 { width: 18px; }
.w30 { width: 30px; }
.w37 { width: 37px; }
.w38 { width: 38px; }
.w40 { width: 40px; }
.w42 { width: 42px; }
.ml4 { margin-left: 4px; }
.ml5 { margin-left: 5px; }

.tb-text {
  margin: 0 8px 0 7px;
  font-size: 16.500px;
}

.pressed {
  background: #4d4d4d;
  border-radius: 6px;
}

.vsep {
  width: 1px;
  height: 34px;
  margin: 0 14px;
  background: #4a4a4a;
  flex: none;
}

.vsep.small { margin: 0 9px; }
.vsep.slim { margin: 0 12px; }

.lines {
  width: 24px;
  height: 22px;
  fill: none;
  stroke: #e0e0e0;
  stroke-width: 2;
}

.lines .blue {
  stroke: #4e95d9;
  stroke-width: 1.600;
}

.select {
  display: flex;
  align-items: center;
  justify-content: space-between;
  height: 37px;
  padding: 0 8px;
  font-size: 18.500px;
  background: #333;
  border-bottom: 2px solid #454545;
  border-radius: 6px;
}

.font-name { width: 223px; }
.font-size { width: 84px; margin: 0 11px 0 4px; }
.number-format { width: 246px; }

.grow-a, .shrink-a {
  display: flex;
  align-items: flex-start;
  font-size: 26px;
  font-weight: 300;
  line-height: 30px;
}

.grow-a { margin-right: 20px; }

.fs-b { font-size: 18px; font-weight: 500; }
.fs-i { font-size: 19px; font-style: italic; font-family: "Liberation Serif", serif; }
.fs-u { font-size: 18px; text-decoration: underline; text-underline-offset: 5px; }
.fs-pct { font-size: 26px; font-weight: 300; }

.color-a {
  flex-direction: column;
  font-size: 24px;
  font-weight: 300;
  line-height: 24px;
}

.red-bar {
  display: block;
  width: 26px;
  height: 7px;
  background: #e43a20;
}

.svg-small {
  font: 400 14px Inter, sans-serif;
  fill: #ddd;
}

.svg-tiny {
  font: 400 8px Inter, sans-serif;
  fill: #ddd;
}

.svg-sort {
  font: 300 25px Inter, sans-serif;
  fill: #ddd;
}

.svg-sort.blue-text {
  fill: #4e95d9;
}

/* cell styles */
.styles-panel {
  display: flex;
  align-items: center;
  width: 329px;
  height: 92px;
  padding: 5px 0 8px 29px;
  background: #333;
  border-radius: 8px;
}

.style-grid {
  display: grid;
  grid-template-columns: 134px 134px;
  grid-template-rows: 40px 32px;
  column-gap: 3px;
  row-gap: 7px;
}

.styles-more {
  margin-left: 12px;
}

.style {
  display: flex;
  align-items: center;
  padding-left: 7px;
  font-size: 15.500px;
}

.s-normal {
  color: #000;
  background: #fff;
  border: 2px solid #b8b8b8;
  border-top-width: 5px;
  border-bottom-width: 5px;
  border-radius: 5px;
}

.s-bad {
  align-self: center;
  height: 32px;
  color: #9c0a06;
  background: #f4c7ce;
}

.s-good { color: #1e6100; background: #cdeccf; }
.s-neutral { color: #9c5700; background: #fbe99e; }

/* formula bar */
.formula-bar {
  display: flex;
  align-items: center;
  height: 47px;
  flex: none;
  background: #2a2a2a;
  border-bottom: 4px solid #ececec;
}

.name-box {
  display: flex;
  align-items: center;
  justify-content: space-between;
  width: 133px;
  height: 100%;
  padding: 0 3px 0 15px;
  font-size: 18px;
  border-right: 1px solid #444;
}

.stepper {
  display: flex;
  flex-direction: column;
  gap: 9px;
}

.tri-up, .tri-down {
  display: block;
  width: 0;
  height: 0;
  border-left: 5px solid transparent;
  border-right: 5px solid transparent;
}

.tri-up { border-bottom: 9px solid #bbb; }
.tri-down { border-top: 9px solid #bbb; }

.fb-ic {
  margin-left: 25px;
}

.fx {
  margin: 0 6px 0 20px;
  font: italic 28px "Liberation Serif", serif;
  color: #888;
}

.formula-input {
  flex: 1;
  height: 32px;
  margin-left: 5px;
  background: #3a3a3a;
  border-radius: 4px;
}

.formula-drop {
  display: flex;
  align-items: center;
  justify-content: center;
  width: 38px;
  height: 100%;
}

/* sheet */
.sheet {
  flex: 1;
  display: flex;
  flex-direction: column;
  min-height: 0;
  overflow: hidden;
  background: #fff;
}

.col-head {
  display: flex;
  height: 34px;
  flex: none;
  background: #161616;
  border-bottom: 2px solid #8a8a8a;
}

.corner {
  position: relative;
  width: 45px;
  flex: none;
  border-right: 1px solid #ccc;
}

.corner::after {
  content: "";
  position: absolute;
  right: 3px;
  bottom: 2px;
  border-left: 22px solid transparent;
  border-bottom: 24px solid #5a5a5a;
}

.col {
  flex: none;
  font-size: 16.500px;
  font-weight: 500;
  line-height: 32px;
  text-align: center;
  color: #fff;
  border-right: 1px solid #555;
}

.col-a { width: 1144px; }
.col-b { width: 123.500px; }
.col-c { width: 90.500px; }
.col-d { width: 145px; }
.col-e { width: 104px; }
.col-n { width: 102.900px; }
.col.last { border: 0; }

.col.current {
  background: #5a5a5a;
  box-shadow: inset 0 -2px 0 #1f7a3a;
  border-right: 0;
}

.rows {
  flex: 1;
  min-height: 0;
  overflow: hidden;
  background: linear-gradient(#161616, #161616) left top / 44px 100% no-repeat;
}

.row {
  display: grid;
  grid-template-columns: 44px 1144px 123.500px 90.500px 145px 1fr;
  height: 25.360px;
  font-family: Roboto, sans-serif;
  font-size: 17.350px;
  line-height: 25px;
  color: #0a0a0a;
}

.row.first {
  margin-top: -17px;
}

.row b {
  font-size: 17px;
  font-weight: 500;
  text-align: center;
  color: #fff;
  background: #161616;
  border-bottom: 2px solid #5a5a5a;
}

.row span {
  padding: 0 5px;
  white-space: nowrap;
  overflow: hidden;
  border-right: 2px solid #d8d8d8;
  border-bottom: 2px solid #d8d8d8;
}

.row span:nth-child(4), .row span:nth-child(5) {
  text-align: right;
}

.row i {
  background: linear-gradient(90deg, transparent calc(100% - 2px), #d8d8d8 0) 1px 0 / 102.900px 100%;
  border-bottom: 2px solid #d8d8d8;
}

.row.t span {
  border-bottom-color: #a2dd85;
}

.row.t span:nth-child(5) {
  position: relative;
  border-right-color: #a2dd85;
}

.row.t:nth-child(odd) span {
  background: #e0f1d4;
  border-right-color: #e0f1d4;
}

.row.t:nth-child(odd) span:nth-child(5) {
  border-right-color: #a2dd85;
}

.row.end span:nth-child(5)::after {
  content: "";
  position: absolute;
  right: 0;
  bottom: 0;
  width: 5px;
  height: 5px;
  background: #3a52b8;
}

/* bottom bars */
.sheet-tabs {
  display: flex;
  align-items: flex-start;
  height: 42px;
  flex: none;
  background: #333;
  border-bottom: 2px solid #111;
}

.nav-arrows {
  display: flex;
  align-items: center;
  gap: 24px;
  width: 95px;
  height: 34px;
  padding-left: 24px;
}

.tri-left, .tri-right {
  display: block;
  width: 0;
  height: 0;
  border-top: 8px solid transparent;
  border-bottom: 8px solid transparent;
}

.tri-left { border-right: 10px solid #666; }
.tri-right { border-left: 10px solid #666; }

.sheet-tab {
  width: 126px;
  height: 40px;
  font-size: 18.500px;
  line-height: 36px;
  text-align: center;
  color: #9a9a9a;
  background: #1f1f1f;
}

.sheet-tab.on {
  width: 124px;
  height: 35px;
  font-weight: 500;
  color: #2d7d3f;
  background: #fff;
  border-radius: 0 0 4px 4px;
}

.sheet-add {
  width: 61px;
  height: 34px;
  font-size: 28px;
  font-weight: 400;
  line-height: 34px;
  text-align: center;
  color: #bbb;
  border-right: 1px solid #555;
}

.status {
  display: flex;
  align-items: center;
  height: 44px;
  flex: none;
  padding-left: 38px;
  font-size: 19px;
}

.ready {
  margin-right: 33px;
}

.a11y {
  margin-left: 8px;
}

.view-btn {
  display: flex;
  align-items: center;
  justify-content: center;
  width: 49px;
  height: 34px;
  border-radius: 5px;
}

.view-btn.on {
  margin-left: auto;
  margin-right: 9px;
  background: #5e5e5e;
}

.view-btn + .view-btn {
  margin-right: 8px;
}

.zoom-minus {
  width: 13px;
  height: 2px;
  margin: 0 11px 0 10px;
  background: #ddd;
}

.slider {
  display: flex;
  align-items: center;
  justify-content: center;
  width: 158px;
  height: 8px;
  background: #666;
  border-radius: 4px;
}

.slider-knob {
  width: 29px;
  height: 23px;
  background: #e0e0e0;
  border-radius: 10px;
}

.zoom-plus {
  margin: 0 22px 0 10px;
  font-size: 22px;
  font-weight: 300;
}

.zoom-val {
  margin-right: 40px;
  font-size: 18px;
}
```
